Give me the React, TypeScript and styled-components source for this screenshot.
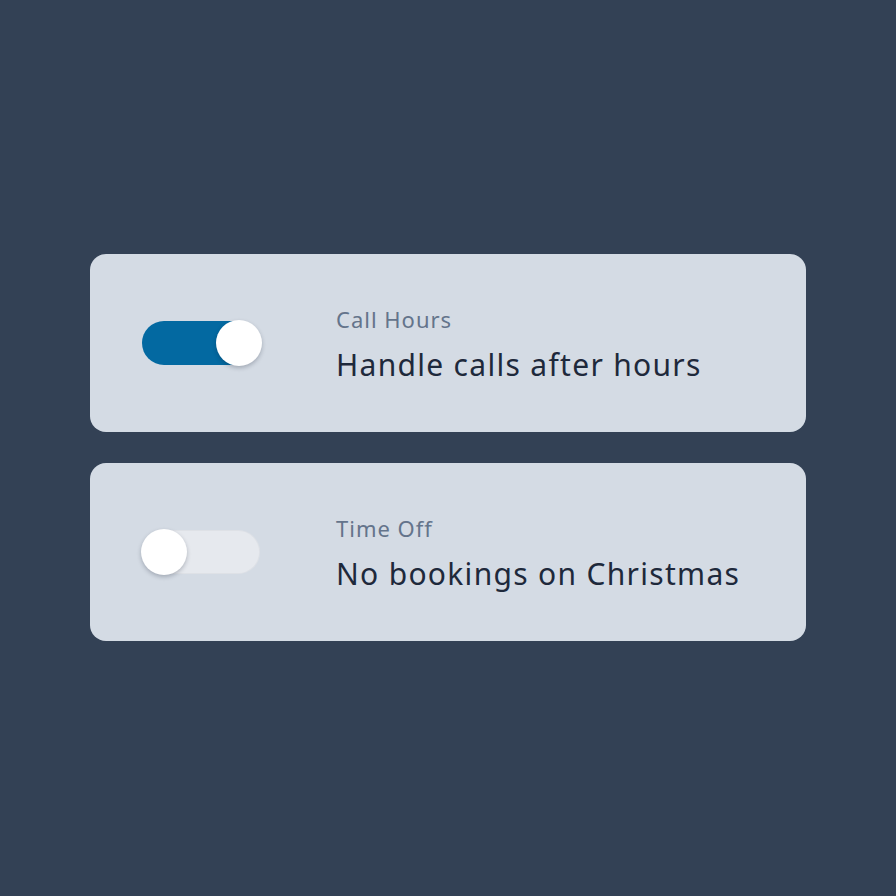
import styled, { createGlobalStyle } from "styled-components";

const GlobalStyle = createGlobalStyle`
  html, body {
    margin: 0;
    padding: 0;
    background: #334155;
  }
  body {
    font-family: "Noto Sans", "DejaVu Sans", sans-serif;
  }
`;

const Page = styled.main`
  width: 896px;
  height: 896px;
  display: flex;
  align-items: center;
  justify-content: center;
  padding-bottom: 1px;
  box-sizing: border-box;
`;

const List = styled.div`
  width: 716px;
  display: flex;
  flex-direction: column;
  gap: 31px;
`;

const Card = styled.div`
  height: 178px;
  box-sizing: border-box;
  background: #d4dbe4;
  border-radius: 16px;
  display: flex;
  align-items: center;
  padding-left: 52px;
  gap: 76px;
`;

const Track = styled.div<{ $on: boolean }>`
  position: relative;
  width: 118px;
  height: 44px;
  border-radius: 22px;
  flex-shrink: 0;
  background: ${(p) => (p.$on ? "#0369a1" : "#e6e9ee")};
  box-shadow: ${(p) => (p.$on ? "none" : "inset 0 0 0 1px rgba(0, 0, 0, 0.03)")};
`;

const Knob = styled.div<{ $on: boolean }>`
  position: absolute;
  top: -1px;
  ${(p) => (p.$on ? "right: -2px;" : "left: -1px;")}
  width: 46px;
  height: 46px;
  border-radius: 50%;
  background: #ffffff;
  box-shadow: 0 2px 4px rgba(15, 23, 42, 0.25);
`;

const Text = styled.div`
  display: flex;
  flex-direction: column;
  gap: 15px;
  margin-top: 3px;
`;

const Label = styled.span`
  font-size: 22px;
  line-height: 26px;
  color: #64748b;
  letter-spacing: 1px;
`;

const Title = styled.span`
  font-size: 30px;
  line-height: 36px;
  color: #1e293b;
  letter-spacing: 1.3px;
`;

type Setting = { label: string; title: string; on: boolean };

const settings: Setting[] = [
  { label: "Call Hours", title: "Handle calls after hours", on: true },
  { label: "Time Off", title: "No bookings on Christmas", on: false },
];

export default function App() {
  return (
    <>
      <GlobalStyle />
      <Page>
        <List>
          {settings.map((s) => (
            <Card key={s.label}>
              <Track $on={s.on} role="switch" aria-checked={s.on}>
                <Knob $on={s.on} />
              </Track>
              <Text>
                <Label>{s.label}</Label>
                <Title>{s.title}</Title>
              </Text>
            </Card>
          ))}
        </List>
      </Page>
    </>
  );
}
